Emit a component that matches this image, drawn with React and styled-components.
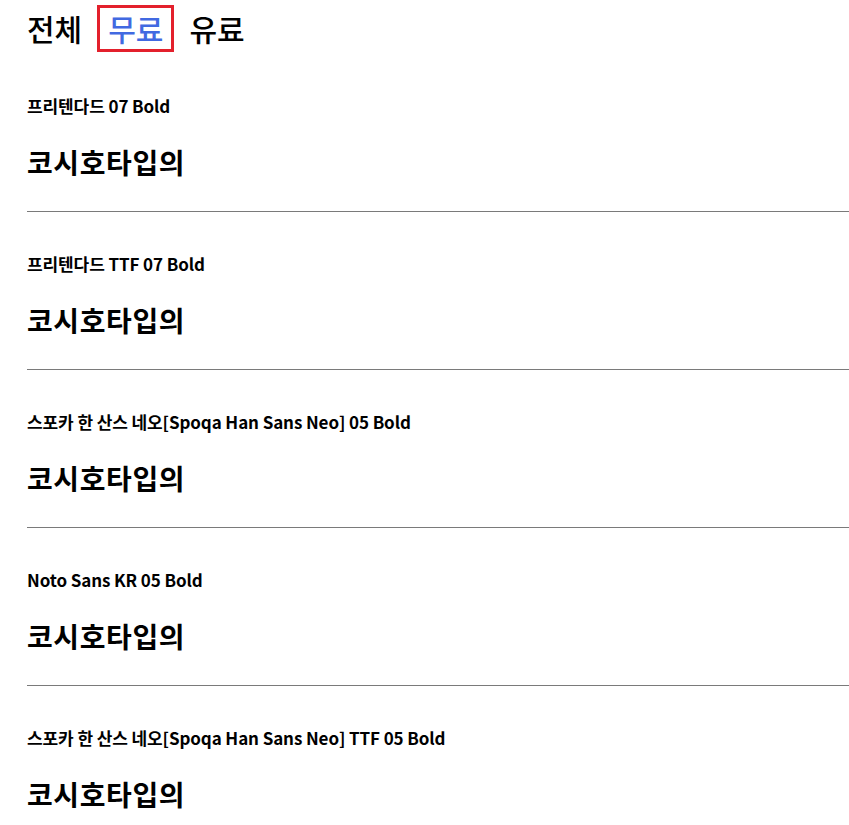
import React, { useState } from "react";
import styled, { createGlobalStyle } from "styled-components";

const fonts = [
  { name: "프리텐다드 07 Bold" },
  { name: "프리텐다드 TTF 07 Bold" },
  { name: "스포카 한 산스 네오[Spoqa Han Sans Neo] 05 Bold" },
  { name: "Noto Sans KR 05 Bold" },
  { name: "스포카 한 산스 네오[Spoqa Han Sans Neo] TTF 05 Bold" },
];

const tabs = ["전체", "무료", "유료"];

function App() {
  const [active, setActive] = useState("무료");
  return (
    <Page>
      <GlobalStyle />
      <TabBar>
        {tabs.map((tab) => (
          <Tab key={tab} $active={tab === active} onClick={() => setActive(tab)}>
            {tab}
          </Tab>
        ))}
      </TabBar>
      <FontList>
        {fonts.map((font) => (
          <FontItem key={font.name}>
            <FontName>{font.name}</FontName>
            <Sample>코시호타입의</Sample>
          </FontItem>
        ))}
      </FontList>
    </Page>
  );
}

const GlobalStyle = createGlobalStyle`
  body {
    margin: 0;
    background: #fff;
    color: #000;
    font-family: "Noto Sans CJK KR", "Noto Sans", sans-serif;
    overflow-x: hidden;
  }
`;

const Page = styled.div`
  padding-left: 27px;
`;

const TabBar = styled.div`
  display: flex;
  gap: 4px;
  margin-left: -11px;
  padding-top: 5px;
  margin-bottom: 2px;
`;

const Tab = styled.button`
  font-family: inherit;
  font-size: 30px;
  line-height: 35px;
  font-weight: 500;
  padding: 3px 8px;
  background: none;
  border: 3px solid ${(p) => (p.$active ? "#e3202c" : "transparent")};
  color: ${(p) => (p.$active ? "#4169e1" : "#000")};
  cursor: pointer;
`;

const FontList = styled.div`
  display: flex;
  flex-direction: column;
`;

const FontItem = styled.div`
  padding: 42px 0 32px;
  border-bottom: 1px solid #7a7a7a;
`;

const FontName = styled.div`
  font-size: 17px;
  line-height: 20px;
  font-weight: 700;
  letter-spacing: -0.1px;
`;

const Sample = styled.div`
  margin-top: 29px;
  font-size: 28px;
  line-height: 34px;
  font-weight: 700;
  letter-spacing: 0.6px;
`;

export default App;
